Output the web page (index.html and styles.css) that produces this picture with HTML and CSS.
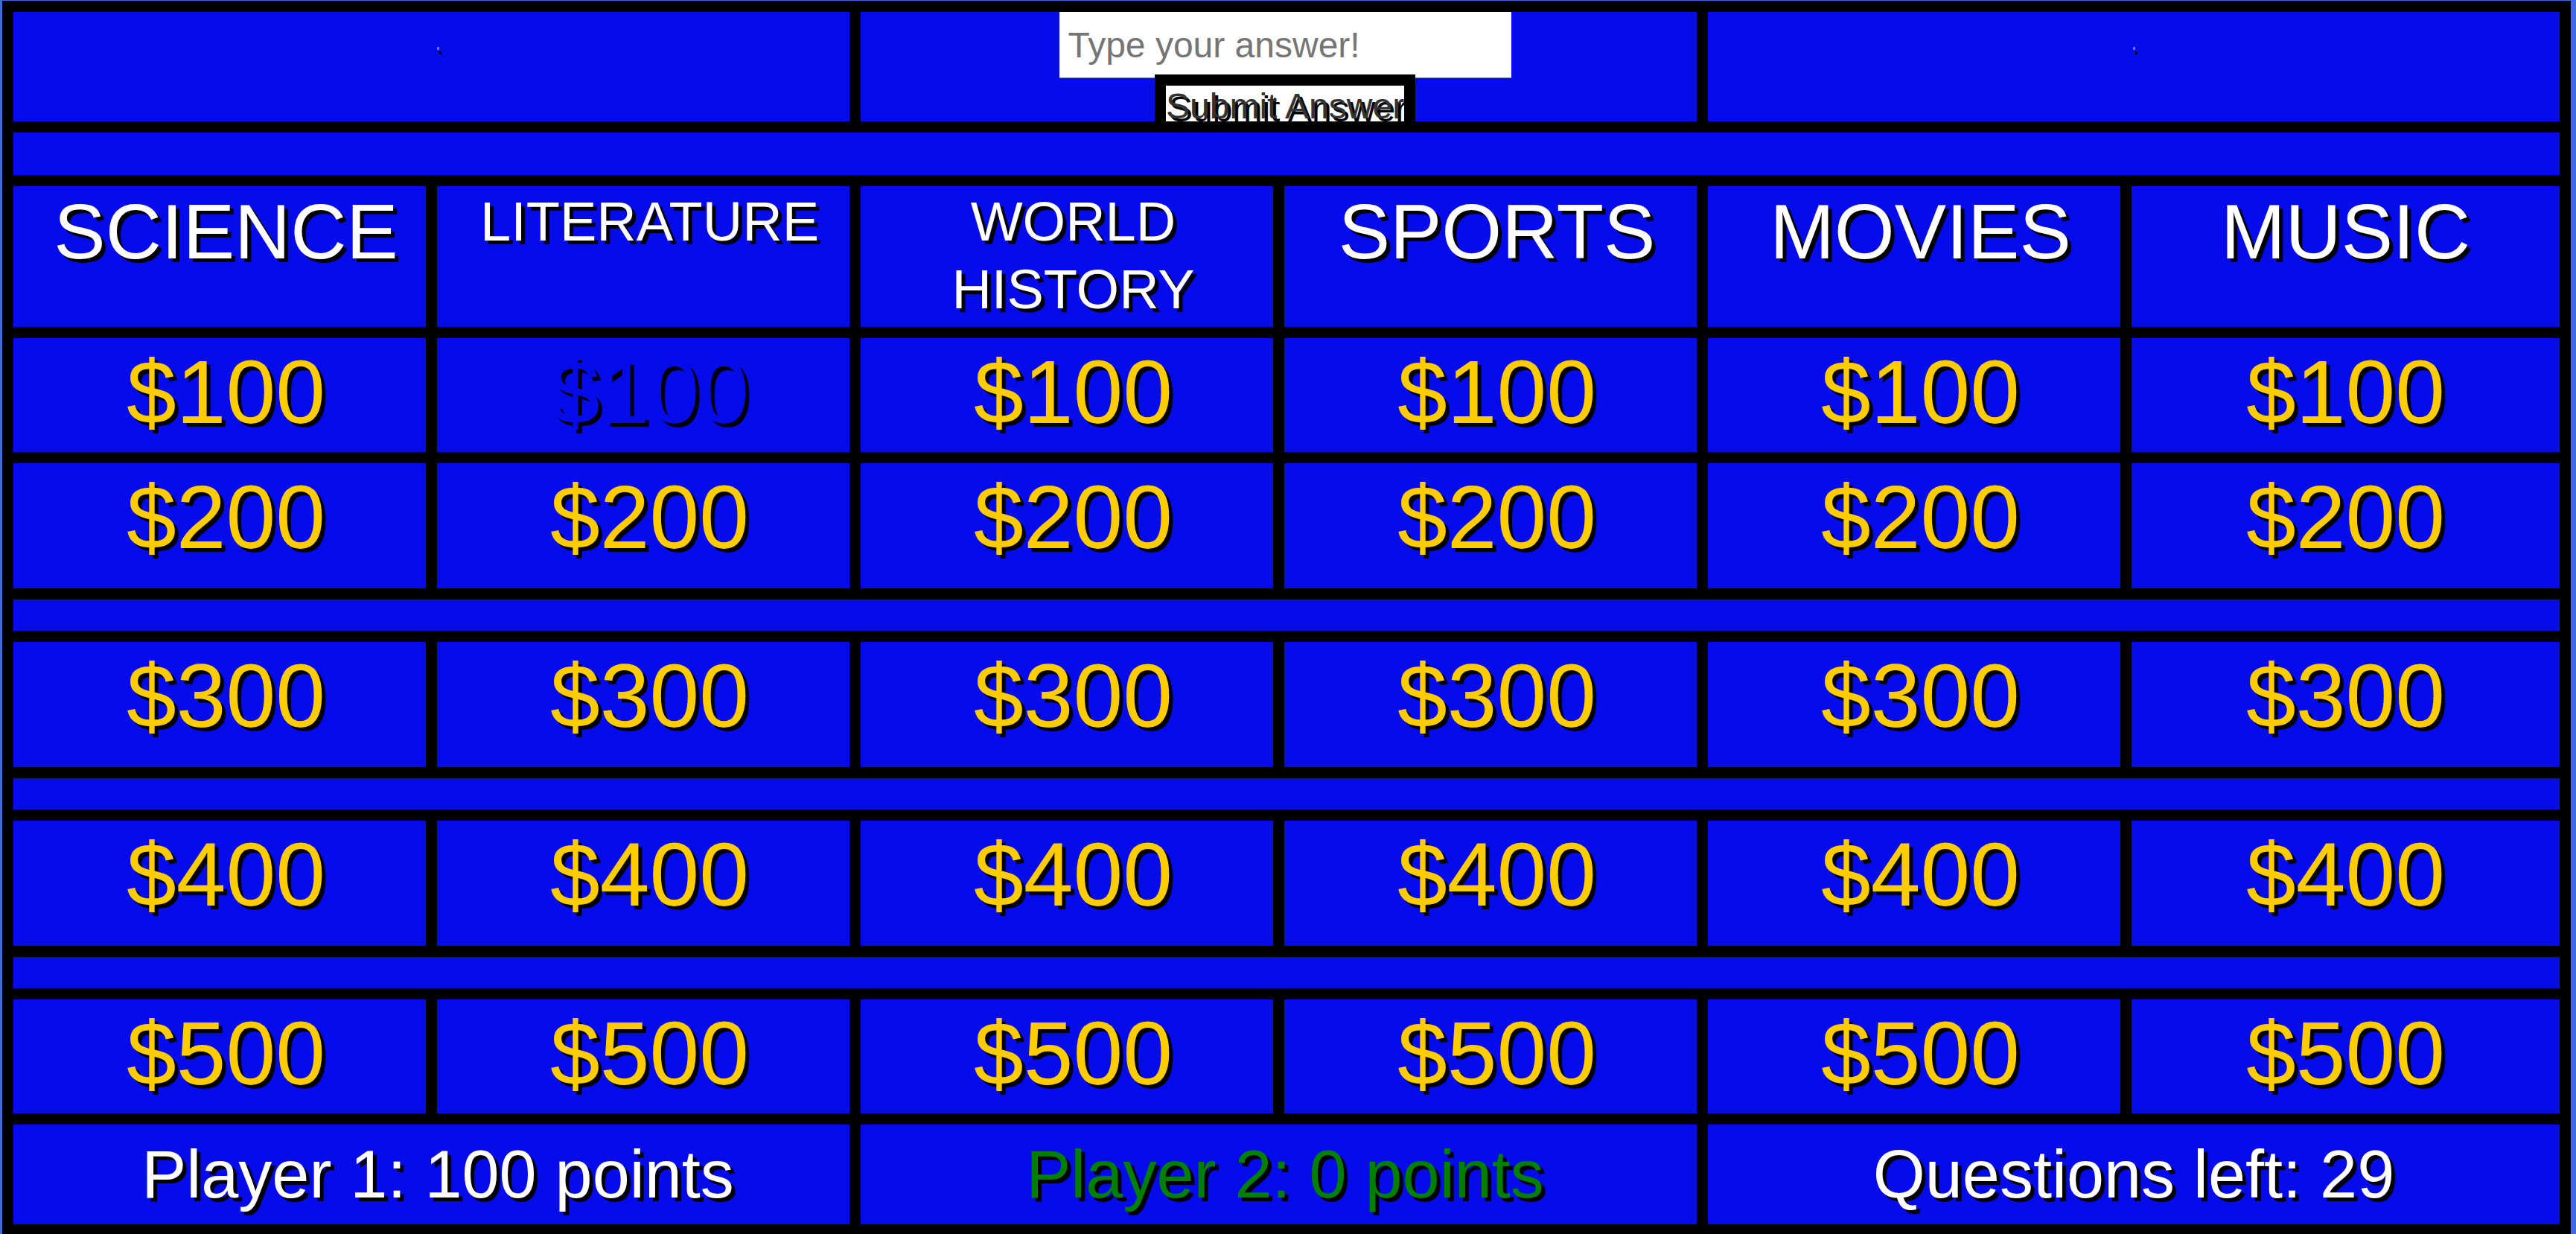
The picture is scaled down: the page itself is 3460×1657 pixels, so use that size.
FILE: index.html
```html
<!DOCTYPE html>
<html lang="en">

<head>
    <link rel="stylesheet" href="styles.css">
</head>

<body>
    <table class="board">
        <colgroup>
            <col class="col-fixed"><col class="col-fixed"><col class="col-fixed">
            <col class="col-fixed"><col class="col-fixed"><col>
        </colgroup>

        <tr class="row-top">
            <td colspan="2" class="side-cell"><span class="mark"></span></td>
            <td colspan="2" class="answer-cell">
                <div class="answer-box">
                    <input type="text" id="answer" placeholder="Type your answer!">
                    <button id="submit">Submit Answer</button>
                </div>
            </td>
            <td colspan="2" class="side-cell"><span class="mark"></span></td>
        </tr>

        <tr class="row-gap-wide"><td colspan="6"></td></tr>

        <tr class="row-cats">
            <td class="category big">SCIENCE</td>
            <td class="category small">LITERATURE</td>
            <td class="category small">WORLD HISTORY</td>
            <td class="category big">SPORTS</td>
            <td class="category big">MOVIES</td>
            <td class="category big">MUSIC</td>
        </tr>

        <tr class="row-short">
            <td class="money">$100</td>
            <td class="money used">$100</td>
            <td class="money">$100</td>
            <td class="money">$100</td>
            <td class="money">$100</td>
            <td class="money">$100</td>
        </tr>

        <tr class="row-tall">
            <td class="money">$200</td>
            <td class="money">$200</td>
            <td class="money">$200</td>
            <td class="money">$200</td>
            <td class="money">$200</td>
            <td class="money">$200</td>
        </tr>

        <tr class="row-gap"><td colspan="6"></td></tr>

        <tr class="row-tall">
            <td class="money">$300</td>
            <td class="money">$300</td>
            <td class="money">$300</td>
            <td class="money">$300</td>
            <td class="money">$300</td>
            <td class="money">$300</td>
        </tr>

        <tr class="row-gap"><td colspan="6"></td></tr>

        <tr class="row-tall">
            <td class="money">$400</td>
            <td class="money">$400</td>
            <td class="money">$400</td>
            <td class="money">$400</td>
            <td class="money">$400</td>
            <td class="money">$400</td>
        </tr>

        <tr class="row-gap"><td colspan="6"></td></tr>

        <tr class="row-short">
            <td class="money">$500</td>
            <td class="money">$500</td>
            <td class="money">$500</td>
            <td class="money">$500</td>
            <td class="money">$500</td>
            <td class="money">$500</td>
        </tr>

        <tr class="row-score">
            <td colspan="2" class="score">Player 1: 100 points</td>
            <td colspan="2" class="score player-two">Player 2: 0 points</td>
            <td colspan="2" class="score">Questions left: 29</td>
        </tr>
    </table>
</body>

</html>
```

FILE: styles.css
```css
body {
    margin: 1px 7px 0 3px;
    background-color: royalblue;
    font-family: "Liberation Sans", Arial, sans-serif;
}

.board {
    width: 100%;
    table-layout: fixed;
    border-collapse: separate;
    border-spacing: 15px;
    background-color: #000;
}

.board .col-fixed {
    width: 554px;
}

.board td {
    background-color: #060ce9;
    padding: 0 0 0 17px;
    text-align: center;
    color: #fff;
    text-shadow: 5px 5px 1px #000;
}

.board td:last-child {
    padding-left: 0;
}

/* row heights */
.row-top { height: 147px; }
.row-gap-wide { height: 57px; }
.row-cats { height: 189px; }
.row-short { height: 153px; }
.row-tall { height: 168px; }
.row-gap { height: 42px; }
.row-score { height: 134px; }

.side-cell {
    vertical-align: top;
}

.mark {
    display: inline-block;
    margin-top: 47px;
    width: 3px;
    height: 4px;
    background-color: #5b7be0;
    box-shadow: 3px 6px 0 0 #000;
}

.answer-cell {
    vertical-align: top;
}

.answer-box {
    height: 147px;
    overflow: hidden;
    display: flex;
    flex-direction: column;
    align-items: center;
}

.answer-box input {
    flex-shrink: 0;
    width: 607px;
    height: 89px;
    box-sizing: border-box;
    margin: 0;
    padding: 0 12px;
    border: none;
    border-bottom: 1px solid #7a80b0;
    background-color: #fff;
    font-family: "Liberation Sans", Arial, sans-serif;
    font-size: 48px;
    outline: none;
}

.answer-box input::placeholder {
    color: #757575;
}

.answer-box button {
    flex-shrink: 0;
    width: 350px;
    height: 85px;
    box-sizing: border-box;
    margin-top: -5px;
    padding: 0;
    border: 15px solid #000;
    background-color: #fff;
    font-family: "Liberation Sans", Arial, sans-serif;
    font-size: 48px;
    line-height: 55px;
    white-space: nowrap;
    color: #333;
    text-shadow: 4px 4px 0 #000;
    cursor: pointer;
}

.category {
    vertical-align: top;
    padding-top: 2px !important;
}

.category.big {
    font-size: 104px;
}

.category.small {
    font-size: 74px;
    line-height: 1.23;
}

.money {
    vertical-align: top;
    padding-top: 3px !important;
    font-size: 120px;
    color: #ffcc00 !important;
}

.money.used {
    color: #060ce9 !important;
}

.score {
    vertical-align: middle;
    font-size: 90px;
}

.player-two {
    color: green !important;
}
```
